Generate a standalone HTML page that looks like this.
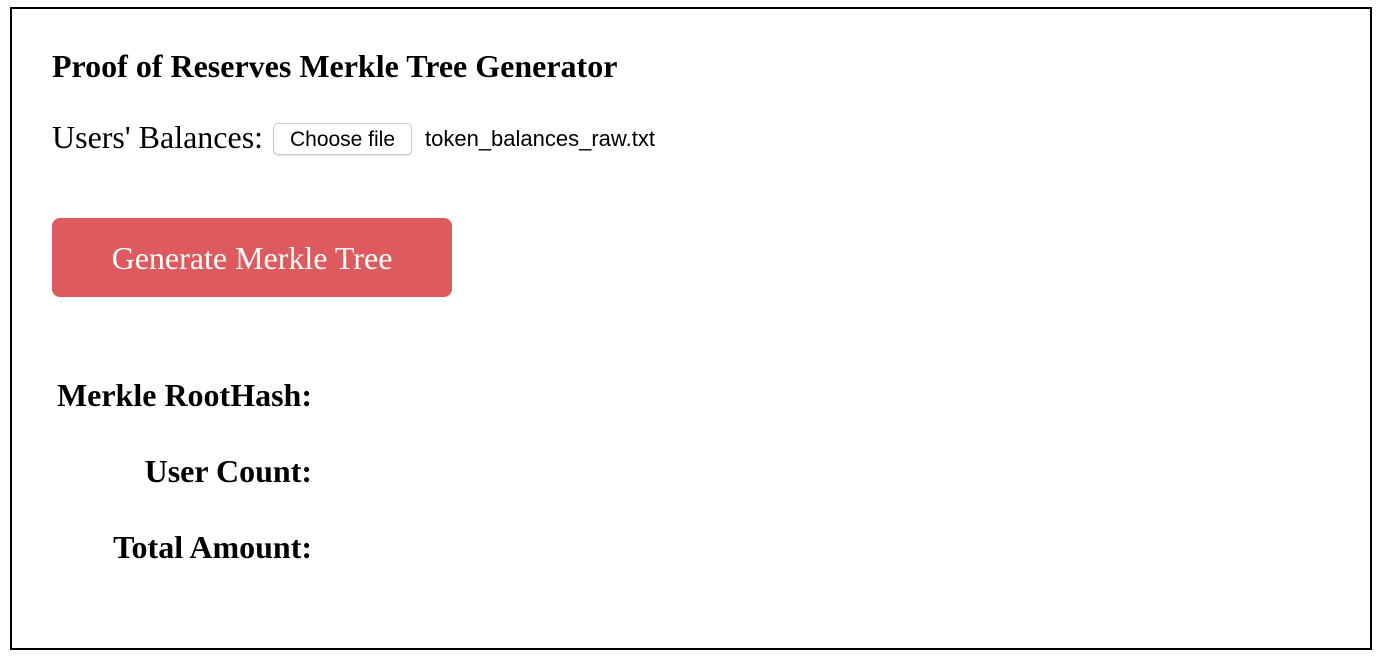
<!DOCTYPE html>
<html><head><meta charset="utf-8"><style>
html,body{margin:0;padding:0;background:#fff;}
body{width:1382px;height:662px;position:relative;overflow:hidden;font-family:"Liberation Serif",serif;color:#000;}
.box{position:absolute;left:10px;top:7px;width:1358px;height:639px;border:2px solid #000;}
.a{position:absolute;white-space:nowrap;line-height:1;}
.title{left:52px;top:50px;font-size:32px;font-weight:bold;}
.ub{left:52px;top:121px;font-size:32px;}
.cf{position:absolute;left:273px;top:123px;width:139px;height:32px;border:1px solid #c8c8c8;border-radius:5px;box-sizing:border-box;background:#fff;font-family:"Liberation Sans",sans-serif;font-size:21px;text-align:center;line-height:32px;box-shadow:0 1px 1px rgba(0,0,0,.12);}
.fn{left:425px;top:128px;font-family:"Liberation Sans",sans-serif;font-size:22px;}
.btn{position:absolute;left:52px;top:218px;width:400px;height:79px;background:#dd5b5e;border-radius:8px;color:#fff;font-size:32px;text-align:center;line-height:81px;}
.lbl{right:1070px;font-size:32px;font-weight:bold;text-align:right;}
</style></head><body>
<div class="box"></div>
<div class="a title">Proof of Reserves Merkle Tree Generator</div>
<div class="a ub">Users' Balances:</div>
<div class="cf">Choose file</div>
<div class="a fn">token_balances_raw.txt</div>
<div class="btn">Generate Merkle Tree</div>
<div class="a lbl" style="top:379px">Merkle RootHash:</div>
<div class="a lbl" style="top:455px">User Count:</div>
<div class="a lbl" style="top:531px">Total Amount:</div>
</body></html>
